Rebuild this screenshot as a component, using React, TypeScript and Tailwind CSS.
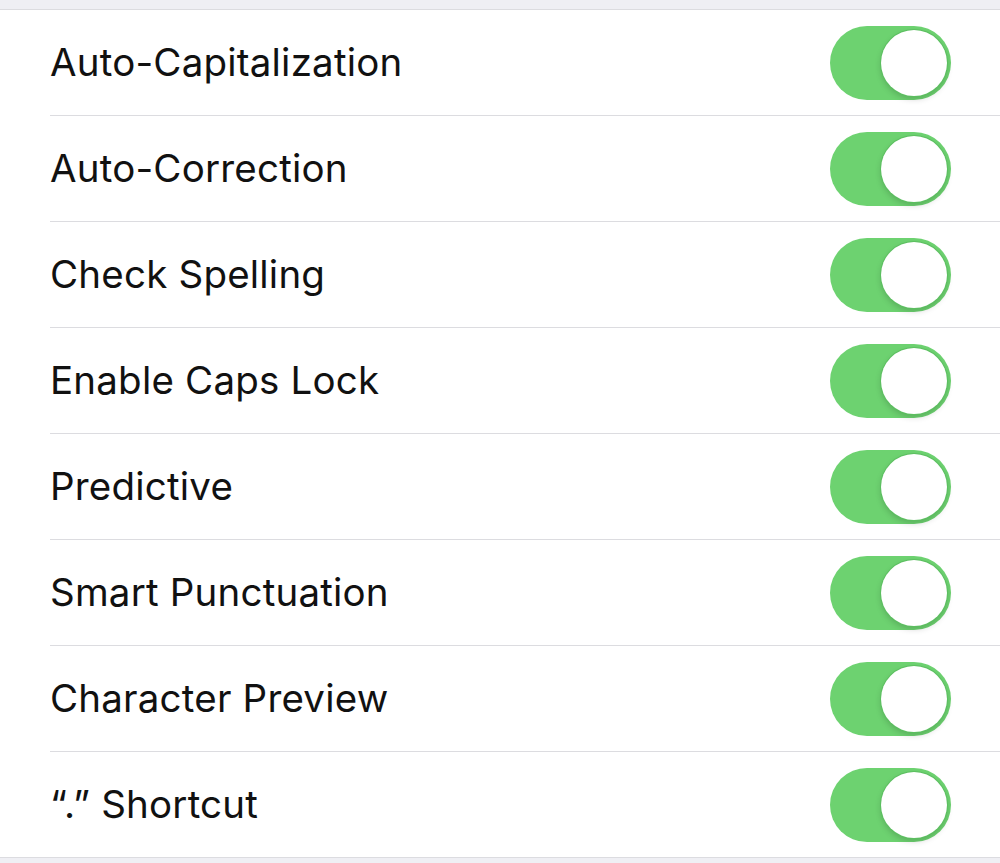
import React from 'react';

const settings = [
  'Auto-Capitalization',
  'Auto-Correction',
  'Check Spelling',
  'Enable Caps Lock',
  'Predictive',
  'Smart Punctuation',
  'Character Preview',
  '“.” Shortcut',
];

const Toggle = () => (
  <div className="relative h-[74px] w-[121px] shrink-0 rounded-full bg-[#6dd270]">
    <div className="absolute right-[4px] top-[4px] h-[66px] w-[66px] rounded-full bg-white shadow-[0_3px_6px_rgba(0,0,0,0.18)] ring-1 ring-[#5cbf60]" />
  </div>
);

export default function App() {
  return (
    <div className="h-[863px] w-[1000px] overflow-hidden bg-[#efeff4]" style={{ fontFamily: 'Inter, "Noto Sans", sans-serif' }}>
      <div className="h-[9px]" />
      <div className="border-y border-[#dcdce0] bg-white">
        {settings.map((label, i) => (
          <div key={label} className="pl-[50px]">
            <div
              className={
                'flex items-center justify-between pr-[49px] ' +
                (i < settings.length - 1 ? 'h-[106px] border-b border-[#dcdce0]' : 'h-[105px]')
              }
            >
              <span className="text-[38.5px] leading-none tracking-[0.2px] text-[#111]">{label}</span>
              <Toggle />
            </div>
          </div>
        ))}
      </div>
    </div>
  );
}
